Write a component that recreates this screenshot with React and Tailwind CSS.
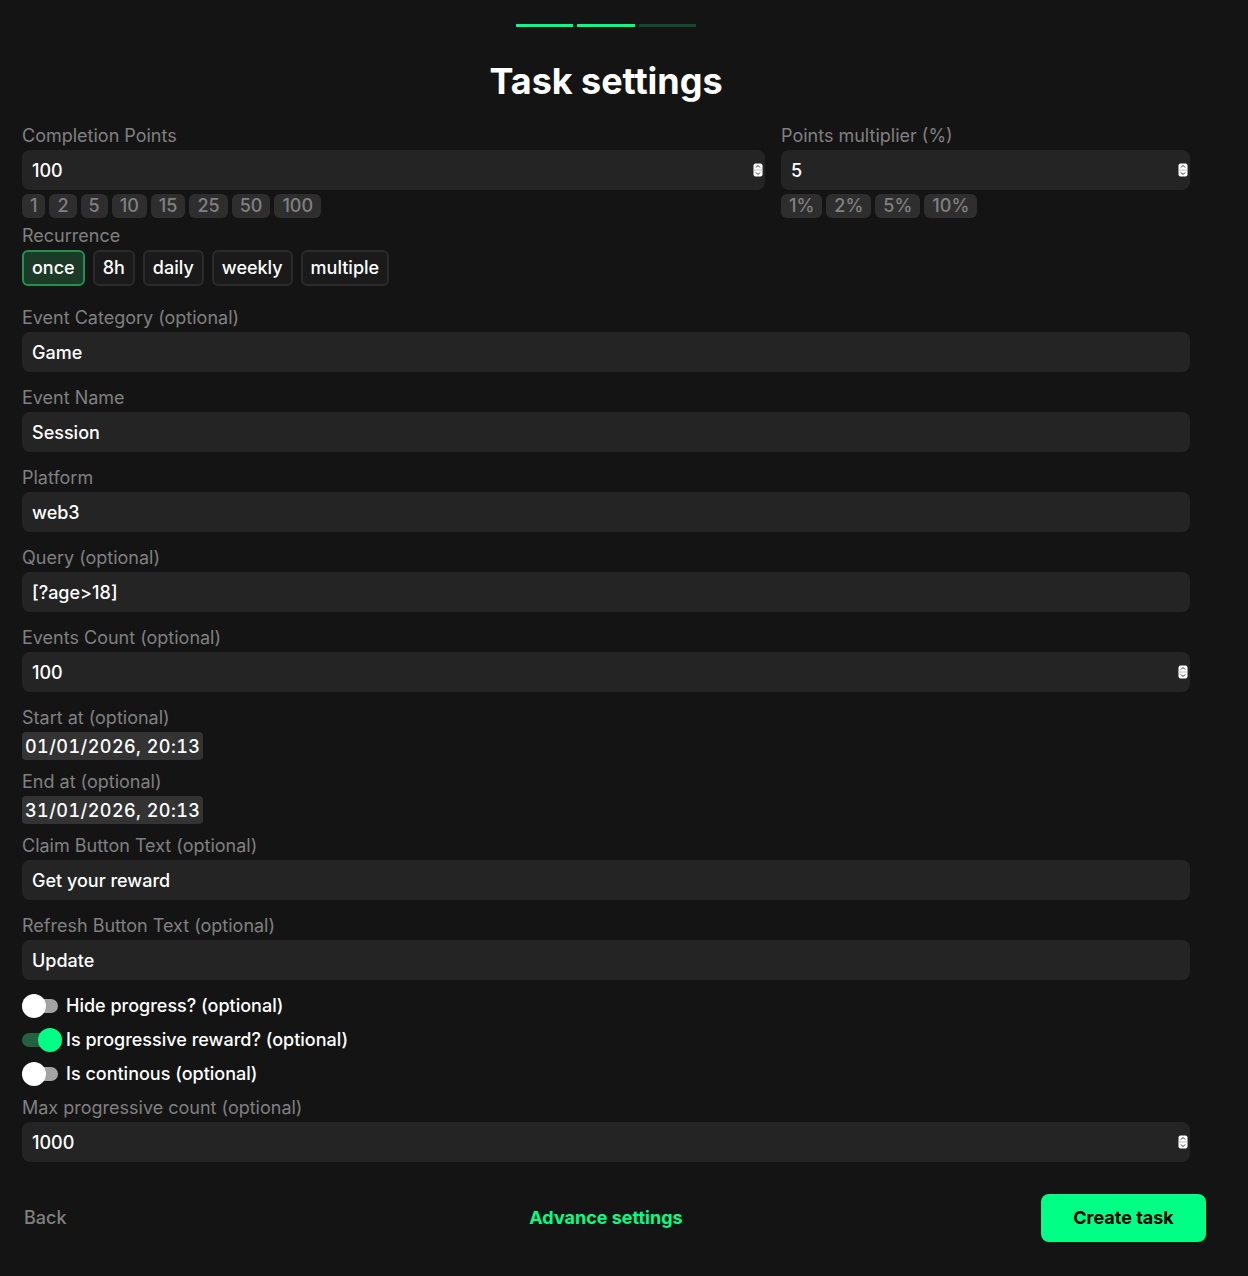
import React, { useState } from 'react';

const inputClass =
    'w-full h-10 rounded-lg bg-[#242424] px-2.5 text-lg font-medium text-white outline-none [&::-webkit-inner-spin-button]:appearance-none';

const Label = ({ children, className = '' }) => (
    <div className={`h-5 leading-5 text-lg text-[#808080] ${className}`}>{children}</div>
);

// Native spinner stays hidden, this one has the small white pill look
const Spinner = () => (
    <svg className="absolute right-[2px] top-[13px] pointer-events-none" width="10" height="14" viewBox="0 0 10 14">
        <rect x="0.5" y="0.5" width="9" height="13" rx="2" fill="#fff" />
        <path d="M0.5 7H9.5" stroke="#c4c4c4" />
        <path d="M3 4.5L5 2.5L7 4.5" stroke="#333" fill="none" />
        <path d="M3 9.5L5 11.5L7 9.5" stroke="#333" fill="none" />
    </svg>
);

const Field = ({ label, value, type = 'text' }) => {
    const [val, setVal] = useState(value);
    return (
        <div className="flex flex-col gap-1">
            <Label>{label}</Label>
            <div className="relative">
                <input type={type} value={val} onChange={(e) => setVal(e.target.value)} className={inputClass} />
                {type === 'number' && <Spinner />}
            </div>
        </div>
    );
};

const Chips = ({ items }) => (
    <div className="flex gap-1 mt-1">
        {items.map((item) => (
            <button key={item} className="h-6 px-2 rounded-md bg-[#2e2e2e] text-lg font-medium leading-6 text-[#808080]">
                {item}
            </button>
        ))}
    </div>
);

const DateField = ({ label, value, className = '' }) => (
    <div className={`flex flex-col gap-1 ${className}`}>
        <Label>{label}</Label>
        <div className="w-[181px] h-7 pl-[3px] rounded bg-[#333333] text-lg font-medium tabular-nums leading-[30px] tracking-[0.45px] whitespace-nowrap text-white">
            {value}
        </div>
    </div>
);

const Toggle = ({ label, on }) => (
    <div className="flex items-center h-6 gap-2">
        <div className={`relative w-9 h-3.5 rounded-full ${on ? 'bg-[#22603f]' : 'bg-[#a3a3a3]'}`}>
            <div className={`absolute -top-[5px] w-6 h-6 rounded-full ${on ? 'left-4 bg-[#00ff85]' : 'left-0 bg-white'}`} />
        </div>
        <span className="text-lg font-medium text-white">{label}</span>
    </div>
);

const App = () => {
    const [recurrence, setRecurrence] = useState('once');

    return (
        <div className="min-h-[1276px] bg-[#141414] font-['Inter',sans-serif] antialiased">
            <div className="w-[1200px] ml-1.5 pt-6 pb-[34px]">
                {/* Adımlar */}
                <div className="flex justify-center gap-1">
                    <div className="w-[57px] h-[3px] bg-[#00ff85]" />
                    <div className="w-[58px] h-[3px] bg-[#00ff85]" />
                    <div className="w-[57px] h-[3px] bg-[#14482f]" />
                </div>
                <h1 className="mt-[32px] text-center text-4xl leading-11 font-bold tracking-[-0.05px] text-white">Task settings</h1>

                <div className="px-4 mt-[23px]">
                    <div className="flex gap-4">
                        <div className="flex-1">
                            <Field label="Completion Points" value="100" type="number" />
                            <Chips items={[1, 2, 5, 10, 15, 25, 50, 100]} />
                        </div>
                        <div className="w-[409px]">
                            <Field label="Points multiplier (%)" value="5" type="number" />
                            <Chips items={['1%', '2%', '5%', '10%']} />
                        </div>
                    </div>

                    <Label className="mt-2">Recurrence</Label>
                    <div className="flex gap-2 mt-1">
                        {['once', '8h', 'daily', 'weekly', 'multiple'].map((item) => (
                            <button
                                key={item}
                                onClick={() => setRecurrence(item)}
                                className={`h-9 px-[8px] rounded-md border-2 text-lg font-medium text-white ${
                                    recurrence === item ? 'border-[#22914f] bg-[#1b3b28]' : 'border-[#2a2a2a] bg-[#1a1a1a]'
                                }`}
                            >
                                {item}
                            </button>
                        ))}
                    </div>

                    <div className="flex flex-col gap-4 mt-[22px]">
                        <Field label="Event Category (optional)" value="Game" />
                        <Field label="Event Name" value="Session" />
                        <Field label="Platform" value="web3" />
                        <Field label="Query (optional)" value="[?age>18]" />
                        <Field label="Events Count (optional)" value="100" type="number" />
                    </div>

                    <DateField className="mt-4" label="Start at (optional)" value="01/01/2026, 20:13" />
                    <DateField className="mt-3" label="End at (optional)" value="31/01/2026, 20:13" />

                    <div className="flex flex-col gap-4 mt-3">
                        <Field label="Claim Button Text (optional)" value="Get your reward" />
                        <Field label="Refresh Button Text (optional)" value="Update" />
                    </div>

                    <div className="flex flex-col gap-2.5 mt-3.5">
                        <Toggle label="Hide progress? (optional)" />
                        <Toggle label="Is progressive reward? (optional)" on />
                        <Toggle label="Is continous (optional)" />
                    </div>

                    <div className="mt-3">
                        <Field label="Max progressive count (optional)" value="1000" type="number" />
                    </div>
                </div>

                <div className="mt-8 flex items-center justify-between relative">
                    <button className="pl-[18px] text-lg font-medium text-[#808080]">Back</button>
                    <button className="absolute left-1/2 -translate-x-1/2 text-lg font-bold text-[#00ff85]">Advance settings</button>
                    <button className="w-[165px] h-12 rounded-lg bg-[#00ff85] text-lg font-bold text-black">Create task</button>
                </div>
            </div>
        </div>
    );
};

export default App;
